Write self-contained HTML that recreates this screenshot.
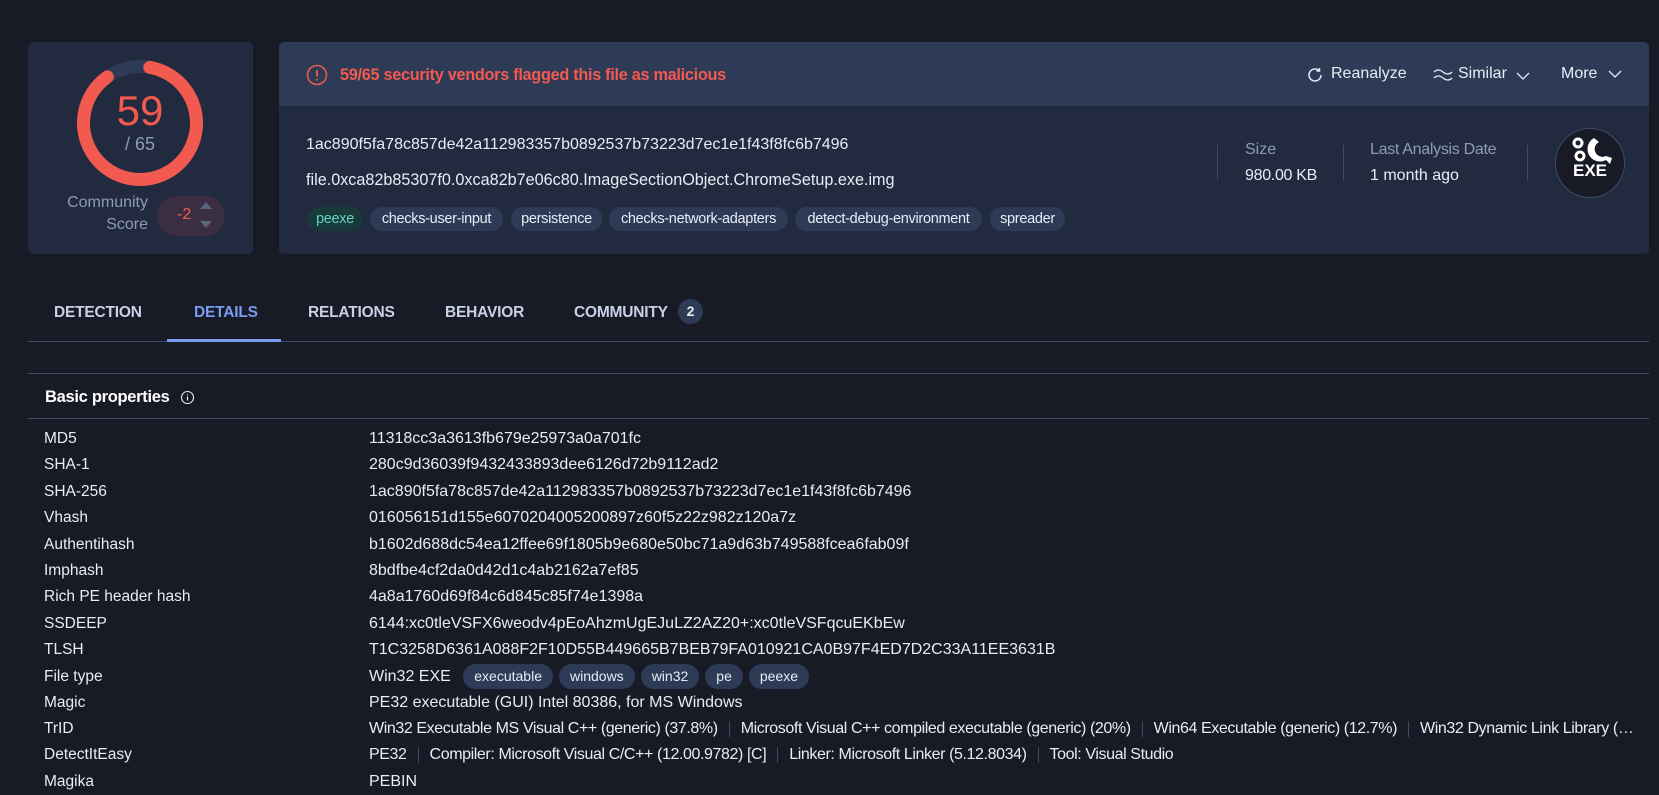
<!DOCTYPE html>
<html><head><meta charset="utf-8"><style>
*{box-sizing:border-box;margin:0;padding:0}
body{width:1659px;height:785px;overflow:hidden;background:#181a26;font-family:"Liberation Sans",sans-serif;color:#e8ecf5;position:relative}
.abs{position:absolute;white-space:nowrap}
.card{position:absolute;background:#222a3f;border-radius:5px}
.tag{position:absolute;height:24px;line-height:24px;border-radius:12px;background:#2e3b56;color:#e8ecf5;font-size:14.5px;text-align:center;letter-spacing:-0.3px}
.muted{color:#8e9bb8}
.tab{position:absolute;top:304px;font-size:15.5px;font-weight:bold;color:#c7d1e8;letter-spacing:-0.2px}
.row{position:absolute;left:44px;font-size:15.5px;height:26px;line-height:26px;white-space:nowrap}
.val{position:absolute;left:369px;font-size:16px;height:26px;line-height:26px;white-space:nowrap}
.sep{display:inline-block;width:1px;height:16px;background:#3f4a66;vertical-align:middle;margin:0 11px}
.ft{display:inline-block;height:25px;line-height:25px;padding:0 11px;border-radius:13px;background:#2e3b56;font-size:14px;margin-left:6px;vertical-align:middle}
</style></head><body>

<div class="card" style="left:28px;top:42px;width:225px;height:212px"></div>
<svg class="abs" style="left:77px;top:60px" width="126" height="126" viewBox="0 0 126 126">
<circle cx="63" cy="63" r="56.5" fill="none" stroke="#2e3b56" stroke-width="13"/>
<circle cx="63" cy="63" r="56.5" fill="none" stroke="#f25a4f" stroke-width="13" stroke-linecap="round" stroke-dasharray="310 355" transform="rotate(-80 63 63)"/>
</svg>
<div class="abs" style="left:77px;width:126px;top:87px;text-align:center;font-size:42px;color:#f25a4f">59</div>
<div class="abs muted" style="left:77px;width:126px;top:134px;text-align:center;font-size:18px">/ 65</div>
<div class="abs muted" style="left:40px;width:108px;top:192px;text-align:right;font-size:16px;line-height:22px">Community<br>Score</div>
<div class="abs" style="left:157px;top:196px;width:68px;height:40px;border-radius:20px;background:#3a2f42"></div>
<div class="abs" style="left:177px;top:206px;font-size:16px;color:#f25a4f">-2</div>
<div class="abs" style="left:200px;top:202px;width:0;height:0;border-left:6px solid transparent;border-right:6px solid transparent;border-bottom:7px solid #5a6580"></div>
<div class="abs" style="left:200px;top:221px;width:0;height:0;border-left:6px solid transparent;border-right:6px solid transparent;border-top:7px solid #5a6580"></div>

<div class="card" style="left:279px;top:42px;width:1370px;height:212px"></div>
<div class="abs" style="left:279px;top:42px;width:1370px;height:64px;background:#2e3b56;border-radius:5px 5px 0 0"></div>
<svg class="abs" style="left:306px;top:64px" width="22" height="22" viewBox="0 0 22 22"><circle cx="11" cy="11" r="9.5" fill="none" stroke="#f25a4f" stroke-width="1.5"/><path d="M11 6v6.5M11 15v1.5" stroke="#f25a4f" stroke-width="1.8"/></svg>
<div class="abs" style="left:340px;top:66px;font-size:16.3px;font-weight:bold;color:#f25a4f;letter-spacing:-0.3px">59/65 security vendors flagged this file as malicious</div>
<svg class="abs" style="left:1306px;top:66px" width="18" height="18" viewBox="0 0 18 18"><path d="M15 9a6 6 0 1 1-2-4.5M13.5 2v3h-3" fill="none" stroke="#e8ecf5" stroke-width="1.5"/></svg>
<div class="abs" style="left:1331px;top:65px;font-size:16px">Reanalyze</div>
<svg class="abs" style="left:1433px;top:68px" width="20" height="14" viewBox="0 0 20 14"><path d="M1 4q4-4 9 0t9 0M1 10q4-4 9 0t9 0" fill="none" stroke="#e8ecf5" stroke-width="1.3"/></svg>
<div class="abs" style="left:1458px;top:65px;font-size:16px">Similar</div>
<svg class="abs" style="left:1516px;top:72px" width="14" height="9" viewBox="0 0 14 9"><path d="M1 1l6 6 6-6" fill="none" stroke="#e8ecf5" stroke-width="1.3"/></svg>
<div class="abs" style="left:1561px;top:65px;font-size:16px">More</div>
<svg class="abs" style="left:1608px;top:70px" width="14" height="9" viewBox="0 0 14 9"><path d="M1 1l6 6 6-6" fill="none" stroke="#e8ecf5" stroke-width="1.3"/></svg>

<div class="abs" style="left:306px;top:136px;font-size:16px">1ac890f5fa78c857de42a112983357b0892537b73223d7ec1e1f43f8fc6b7496</div>
<div class="abs" style="left:306px;top:171px;font-size:16.2px">file.0xca82b85307f0.0xca82b7e06c80.ImageSectionObject.ChromeSetup.exe.img</div>
<div class="tag" style="left:307px;top:207px;width:56px;background:#19393b;color:#5fd3c0">peexe</div>
<div class="tag" style="left:370px;top:207px;width:133px">checks-user-input</div>
<div class="tag" style="left:511px;top:207px;width:91px">persistence</div>
<div class="tag" style="left:609px;top:207px;width:179px">checks-network-adapters</div>
<div class="tag" style="left:795px;top:207px;width:187px">detect-debug-environment</div>
<div class="tag" style="left:990px;top:207px;width:75px">spreader</div>

<div class="abs" style="left:1217px;top:145px;width:1px;height:35px;background:#3f4a66"></div>
<div class="abs muted" style="left:1245px;top:141px;font-size:16px">Size</div>
<div class="abs" style="left:1245px;top:167px;font-size:16px;letter-spacing:-0.3px">980.00 KB</div>
<div class="abs" style="left:1343px;top:145px;width:1px;height:35px;background:#3f4a66"></div>
<div class="abs muted" style="left:1370px;top:141px;font-size:16px;letter-spacing:-0.3px">Last Analysis Date</div>
<div class="abs" style="left:1370px;top:167px;font-size:16px">1 month ago</div>
<div class="abs" style="left:1527px;top:145px;width:1px;height:35px;background:#3f4a66"></div>
<div class="abs" style="left:1555px;top:128px;width:70px;height:70px;border-radius:50%;background:#181a26;border:1px solid #3f4a66"></div>
<svg class="abs" style="left:1570px;top:136px" width="44" height="30" viewBox="0 0 44 30">
<circle cx="8" cy="7" r="4" fill="none" stroke="#fff" stroke-width="3"/><circle cx="10" cy="20" r="4" fill="none" stroke="#fff" stroke-width="3"/>
<path d="M24 2a11 11 0 1 0 12 22l4 4 2-6-6-2a7 7 0 1 1-7-14z" fill="#fff"/></svg>
<div class="abs" style="left:1555px;top:161px;width:70px;text-align:center;font-size:17px;font-weight:bold;color:#fff">EXE</div>

<div class="tab" style="left:54px">DETECTION</div>
<div class="tab" style="left:194px;color:#7a9cf0">DETAILS</div>
<div class="tab" style="left:308px">RELATIONS</div>
<div class="tab" style="left:445px">BEHAVIOR</div>
<div class="tab" style="left:574px">COMMUNITY</div>
<div class="abs" style="left:678px;top:299px;width:25px;height:25px;border-radius:50%;background:#2e3b56;text-align:center;line-height:25px;font-size:14px;font-weight:bold">2</div>
<div class="abs" style="left:28px;top:341px;width:1621px;height:1px;background:#3f4a66"></div>
<div class="abs" style="left:167px;top:339px;width:114px;height:3px;background:#7a9cf0"></div>
<div class="abs" style="left:28px;top:373px;width:1621px;height:1px;background:#3f4a66"></div>
<div class="abs" style="left:45px;top:388px;font-size:16.5px;font-weight:bold;color:#fff;letter-spacing:-0.3px">Basic properties</div>
<svg class="abs" style="left:180px;top:390px" width="15" height="15" viewBox="0 0 15 15"><circle cx="7.5" cy="7.5" r="6" fill="none" stroke="#e8ecf5" stroke-width="1.1"/><path d="M7.5 6.5v4M7.5 4.2v1" stroke="#e8ecf5" stroke-width="1.2"/></svg>
<div class="abs" style="left:28px;top:418px;width:1621px;height:1px;background:#3f4a66"></div>

<div class="row" style="top:426px">MD5</div><div class="val" style="top:426px">11318cc3a3613fb679e25973a0a701fc</div>
<div class="row" style="top:452px">SHA-1</div><div class="val" style="top:452px">280c9d36039f9432433893dee6126d72b9112ad2</div>
<div class="row" style="top:479px">SHA-256</div><div class="val" style="top:479px">1ac890f5fa78c857de42a112983357b0892537b73223d7ec1e1f43f8fc6b7496</div>
<div class="row" style="top:505px">Vhash</div><div class="val" style="top:505px">016056151d155e6070204005200897z60f5z22z982z120a7z</div>
<div class="row" style="top:532px">Authentihash</div><div class="val" style="top:532px">b1602d688dc54ea12ffee69f1805b9e680e50bc71a9d63b749588fcea6fab09f</div>
<div class="row" style="top:558px">Imphash</div><div class="val" style="top:558px">8bdfbe4cf2da0d42d1c4ab2162a7ef85</div>
<div class="row" style="top:584px">Rich PE header hash</div><div class="val" style="top:584px">4a8a1760d69f84c6d845c85f74e1398a</div>
<div class="row" style="top:611px">SSDEEP</div><div class="val" style="top:611px">6144:xc0tleVSFX6weodv4pEoAhzmUgEJuLZ2AZ20+:xc0tleVSFqcuEKbEw</div>
<div class="row" style="top:637px">TLSH</div><div class="val" style="top:637px">T1C3258D6361A088F2F10D55B449665B7BEB79FA010921CA0B97F4ED7D2C33A11EE3631B</div>
<div class="row" style="top:664px">File type</div><div class="val" style="top:664px">Win32 EXE <span class="ft" style="margin-left:8px">executable</span><span class="ft">windows</span><span class="ft">win32</span><span class="ft">pe</span><span class="ft">peexe</span></div>
<div class="row" style="top:690px">Magic</div><div class="val" style="top:690px">PE32 executable (GUI) Intel 80386, for MS Windows</div>
<div class="row" style="top:716px">TrID</div><div class="val" style="top:716px;width:1265px;overflow:hidden;text-overflow:ellipsis;letter-spacing:-0.4px">Win32 Executable MS Visual C++ (generic) (37.8%)<span class="sep"></span>Microsoft Visual C++ compiled executable (generic) (20%)<span class="sep"></span>Win64 Executable (generic) (12.7%)<span class="sep"></span>Win32 Dynamic Link Library (generic) (7.9%)</div>
<div class="row" style="top:742px">DetectItEasy</div><div class="val" style="top:742px;letter-spacing:-0.4px">PE32<span class="sep"></span>Compiler: Microsoft Visual C/C++ (12.00.9782) [C]<span class="sep"></span>Linker: Microsoft Linker (5.12.8034)<span class="sep"></span>Tool: Visual Studio</div>
<div class="row" style="top:769px">Magika</div><div class="val" style="top:769px">PEBIN</div>
</body></html>
